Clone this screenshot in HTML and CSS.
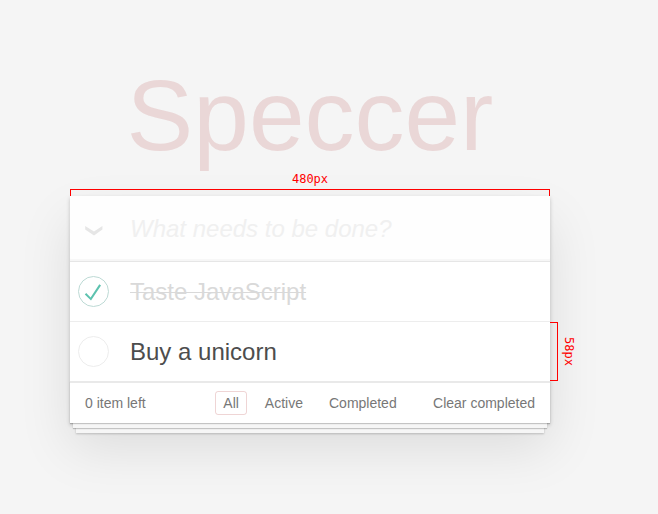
FILE: index.html
```html
<!DOCTYPE html>
<html lang="en">
<head>
<meta charset="utf-8">
<meta name="viewport" content="width=device-width, initial-scale=1">
<title>Speccer</title>
<link rel="stylesheet" href="styles.css">
</head>
<body>
<main class="page">
  <h1 class="title">Speccer</h1>
  <section class="card">
    <span class="measure measure-top"><span class="measure-label">480px</span></span>
    <header class="entry">
      <button class="toggle-all" type="button" aria-label="Mark all as complete">
        <svg width="20" height="12" viewBox="0 0 20 12" aria-hidden="true"><path d="M1.2 1L10 6.4 18.4 1V4.4L10 10.4 1.2 4.4z" fill="#e6e6e6"/></svg>
      </button>
      <input class="new-todo" type="text" placeholder="What needs to be done?" aria-label="New item">
    </header>
    <ul class="list">
      <li class="item done">
        <span class="check">
          <input id="todo-1" type="checkbox" checked>
          <svg class="tick" width="32" height="32" viewBox="0 0 32 32" aria-hidden="true"><path d="M7.8 18.4l1.4-1.3 4.4 4.4 8.7-13.2 1.7 1.1L14 24.6z" fill="#5dc2af"/></svg>
        </span>
        <label class="item-label" for="todo-1">Taste JavaScript</label>
      </li>
      <li class="item">
        <span class="check"><input id="todo-2" type="checkbox"></span>
        <label class="item-label" for="todo-2">Buy a unicorn</label>
        <span class="measure measure-right"><span class="measure-label">58px</span></span>
      </li>
    </ul>
    <footer class="footer">
      <span class="count">0 item left</span>
      <nav class="filters">
        <a class="filter selected" href="#/">All</a>
        <a class="filter" href="#/active">Active</a>
        <a class="filter" href="#/completed">Completed</a>
      </nav>
      <button class="clear" type="button">Clear completed</button>
    </footer>
  </section>
</main>
</body>
</html>
```
FILE: styles.css
```css
* {
  box-sizing: border-box;
}

body {
  margin: 0;
  background: #f5f5f5;
  color: #4d4d4d;
  font: 14px/20px "Liberation Sans", Arial, sans-serif;
}

.page {
  padding: 65px 108px 80px 70px;
}

.title {
  margin: 0 0 31px;
  color: rgba(175, 47, 47, 0.15);
  font-size: 100px;
  font-weight: 400;
  line-height: 100px;
  text-align: center;
}

.card {
  position: relative;
  background: #fff;
  box-shadow: 0 2px 4px rgba(0, 0, 0, 0.2), 0 25px 50px rgba(0, 0, 0, 0.1);
}

.entry {
  display: flex;
  align-items: center;
  height: 65px;
  background: rgba(0, 0, 0, 0.003);
  box-shadow: inset 0 -2px 1px rgba(0, 0, 0, 0.03);
}

.toggle-all {
  flex: 0 0 60px;
  display: flex;
  padding: 4px 14px 0;
  border: 0;
  background: none;
}

.new-todo {
  flex: 1;
  min-width: 0;
  height: 100%;
  padding: 0;
  border: 0;
  outline: 0;
  background: none;
  color: inherit;
  font: 24px/32px "Liberation Sans", Arial, sans-serif;
}

.new-todo::placeholder {
  color: #f0f0f0;
  font-style: italic;
  opacity: 1;
}

.list {
  margin: 0;
  padding: 0;
  border-top: 1px solid #e6e6e6;
  list-style: none;
}

.item {
  position: relative;
  display: flex;
  align-items: center;
  height: 60px;
  border-bottom: 1px solid #ededed;
  font-size: 24px;
  line-height: 28px;
}

.item:last-child {
  height: 59px;
  border-bottom: 0;
}

.check {
  position: relative;
  flex: 0 0 60px;
  padding-left: 8px;
}

.check input {
  display: block;
  width: 31px;
  height: 31px;
  margin: 0;
  border: 1px solid #ededed;
  border-radius: 50%;
  appearance: none;
}

.check input:checked {
  border-color: #bddad5;
}

.tick {
  position: absolute;
  top: 0;
  left: 7px;
  pointer-events: none;
}

.done .item-label {
  color: #d9d9d9;
  text-decoration: line-through 1px;
}

.footer {
  display: grid;
  grid-template-columns: 1fr auto 1fr;
  align-items: center;
  height: 42px;
  padding: 0 15px;
  border-top: 2px solid #e9e9e9;
  color: #777;
  box-shadow:
    0 1px 1px rgba(0, 0, 0, 0.2),
    0 8px 0 -3px #f6f6f6,
    0 9px 1px -3px rgba(0, 0, 0, 0.2),
    0 16px 0 -6px #f6f6f6,
    0 17px 2px -6px rgba(0, 0, 0, 0.2);
}

.filters {
  display: flex;
  gap: 10px;
}

.filter {
  padding: 1px 7px;
  border: 1px solid transparent;
  border-radius: 3px;
  color: inherit;
  text-decoration: none;
}

.selected {
  border-color: rgba(175, 47, 47, 0.2);
}

.clear {
  justify-self: end;
  padding: 0;
  border: 0;
  background: none;
  color: inherit;
  font: inherit;
  white-space: nowrap;
}

.measure {
  position: absolute;
  display: flex;
  border: 1px solid #f00;
  color: #f00;
  font: 12px/14px "DejaVu Sans Mono", monospace;
  pointer-events: none;
}

.measure-top {
  right: 0;
  bottom: 100%;
  left: 0;
  height: 7px;
  border-bottom: 0;
  justify-content: center;
}

.measure-top .measure-label {
  margin-top: -18px;
}

.measure-right {
  top: 0;
  bottom: 0;
  left: 100%;
  width: 8px;
  border-left: 0;
  align-items: center;
}

.measure-right .measure-label {
  margin-left: 12px;
  writing-mode: vertical-rl;
}
```
